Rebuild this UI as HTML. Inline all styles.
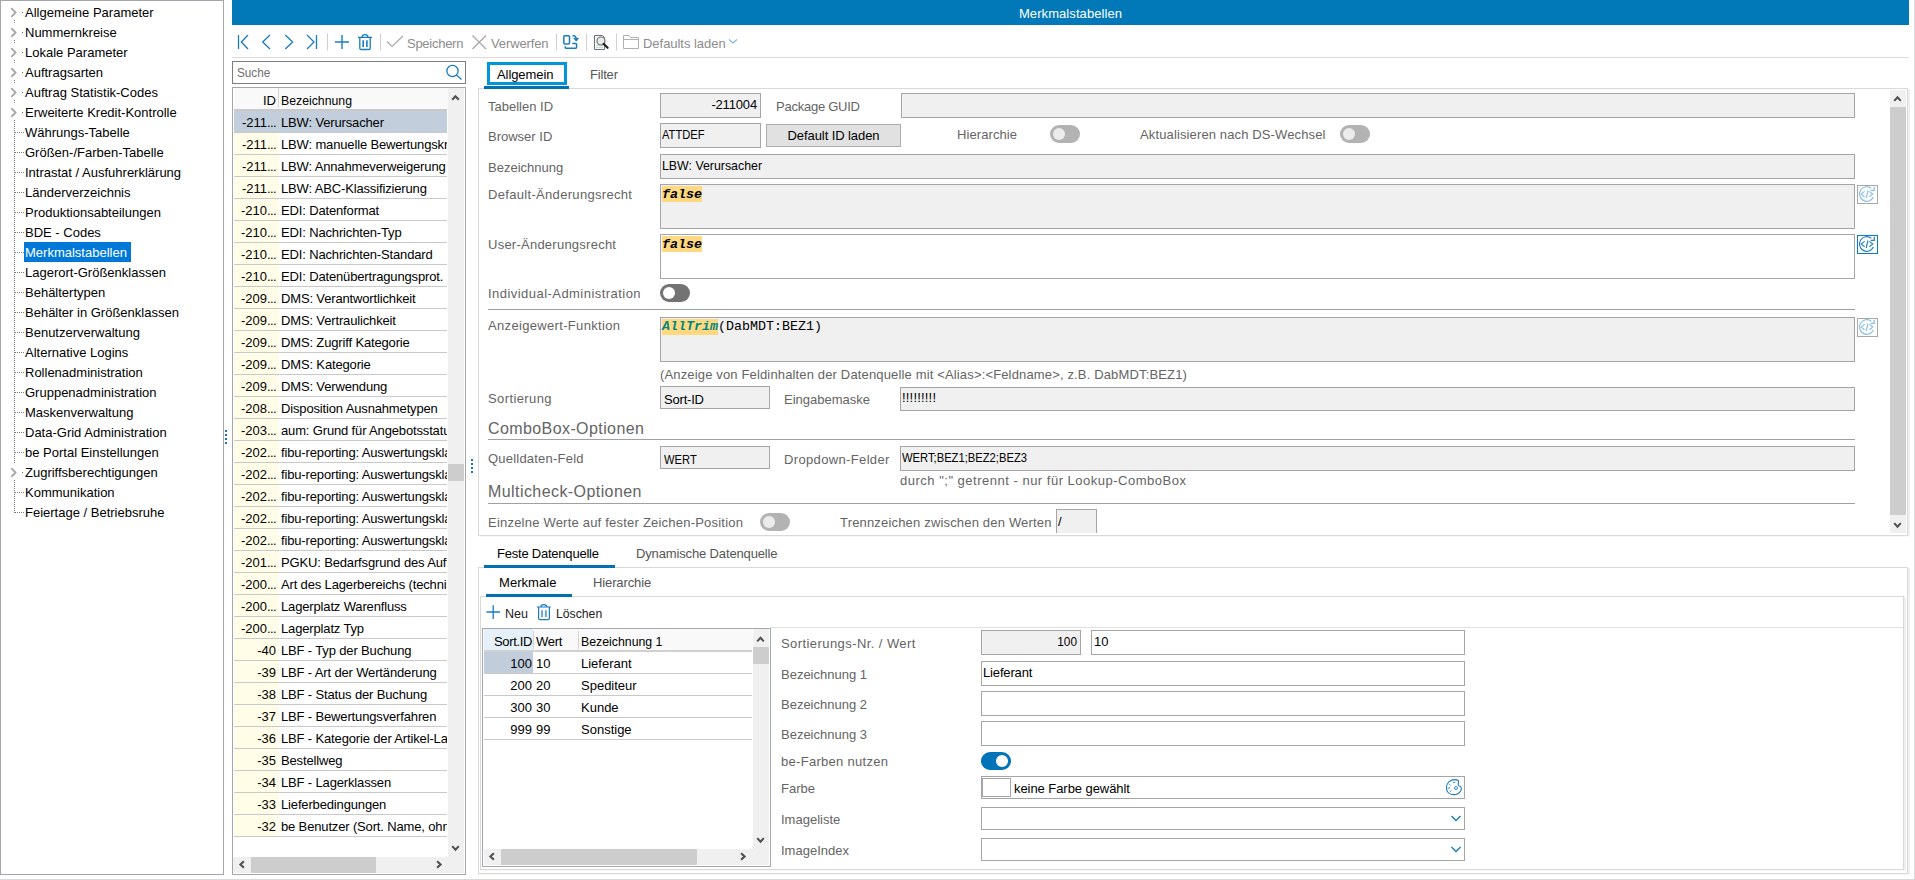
<!DOCTYPE html><html><head><meta charset="utf-8"><style>
html,body{margin:0;padding:0;}
body{width:1915px;height:880px;position:relative;overflow:hidden;background:#fff;font-family:"Liberation Sans",sans-serif;font-size:13px;color:#000;}
div{box-sizing:border-box;}
.t{position:absolute;white-space:nowrap;}
.lbl{color:#636363;}
.fld{position:absolute;background:#f0f0f0;border:1px solid #a5a5a5;}
.fldw{position:absolute;background:#fff;border:1px solid #a5a5a5;}
svg{position:absolute;overflow:visible;}
</style></head><body>
<div style="position:absolute;left:1914px;top:0px;width:1px;height:880px;background:#dcdcdc;"></div>
<div style="position:absolute;left:0px;top:879px;width:1915px;height:1px;background:#d9d9d9;"></div>
<div style="position:absolute;left:0px;top:0px;width:224px;height:875px;border:1px solid #a3a6ab;background:#fff;"></div>
<div style="position:absolute;left:14px;top:20px;width:1px;height:493px;background:repeating-linear-gradient(to bottom,#7a7a7a 0 1px,transparent 1px 2px);"></div>
<div style="position:absolute;left:10px;top:4px;width:9px;height:16px;background:#fff;"></div>
<svg style="left:0;top:0" width="1" height="1"><path d="M11.3 8.2 L15.6 12.5 L11.3 16.8" fill="none" stroke="#a6a6a6" stroke-width="1.8"/></svg>
<div style="position:absolute;left:22px;top:12px;width:1px;height:1px;background:#666;"></div>
<div class="t" style="left:25px;top:4px;line-height:18px;color:#000;">Allgemeine Parameter</div>
<div style="position:absolute;left:10px;top:24px;width:9px;height:16px;background:#fff;"></div>
<svg style="left:0;top:0" width="1" height="1"><path d="M11.3 28.2 L15.6 32.5 L11.3 36.8" fill="none" stroke="#a6a6a6" stroke-width="1.8"/></svg>
<div style="position:absolute;left:22px;top:32px;width:1px;height:1px;background:#666;"></div>
<div class="t" style="left:25px;top:24px;line-height:18px;color:#000;">Nummernkreise</div>
<div style="position:absolute;left:10px;top:44px;width:9px;height:16px;background:#fff;"></div>
<svg style="left:0;top:0" width="1" height="1"><path d="M11.3 48.2 L15.6 52.5 L11.3 56.8" fill="none" stroke="#a6a6a6" stroke-width="1.8"/></svg>
<div style="position:absolute;left:22px;top:52px;width:1px;height:1px;background:#666;"></div>
<div class="t" style="left:25px;top:44px;line-height:18px;color:#000;">Lokale Parameter</div>
<div style="position:absolute;left:10px;top:64px;width:9px;height:16px;background:#fff;"></div>
<svg style="left:0;top:0" width="1" height="1"><path d="M11.3 68.2 L15.6 72.5 L11.3 76.8" fill="none" stroke="#a6a6a6" stroke-width="1.8"/></svg>
<div style="position:absolute;left:22px;top:72px;width:1px;height:1px;background:#666;"></div>
<div class="t" style="left:25px;top:64px;line-height:18px;color:#000;">Auftragsarten</div>
<div style="position:absolute;left:10px;top:84px;width:9px;height:16px;background:#fff;"></div>
<svg style="left:0;top:0" width="1" height="1"><path d="M11.3 88.2 L15.6 92.5 L11.3 96.8" fill="none" stroke="#a6a6a6" stroke-width="1.8"/></svg>
<div style="position:absolute;left:22px;top:92px;width:1px;height:1px;background:#666;"></div>
<div class="t" style="left:25px;top:84px;line-height:18px;color:#000;">Auftrag Statistik-Codes</div>
<div style="position:absolute;left:10px;top:104px;width:9px;height:16px;background:#fff;"></div>
<svg style="left:0;top:0" width="1" height="1"><path d="M11.3 108.2 L15.6 112.5 L11.3 116.8" fill="none" stroke="#a6a6a6" stroke-width="1.8"/></svg>
<div style="position:absolute;left:22px;top:112px;width:1px;height:1px;background:#666;"></div>
<div class="t" style="left:25px;top:104px;line-height:18px;color:#000;">Erweiterte Kredit-Kontrolle</div>
<div style="position:absolute;left:15px;top:132px;width:9px;height:1px;background:repeating-linear-gradient(to right,#7a7a7a 0 1px,transparent 1px 2px);"></div>
<div class="t" style="left:25px;top:124px;line-height:18px;color:#000;">Währungs-Tabelle</div>
<div style="position:absolute;left:15px;top:152px;width:9px;height:1px;background:repeating-linear-gradient(to right,#7a7a7a 0 1px,transparent 1px 2px);"></div>
<div class="t" style="left:25px;top:144px;line-height:18px;color:#000;">Größen-/Farben-Tabelle</div>
<div style="position:absolute;left:15px;top:172px;width:9px;height:1px;background:repeating-linear-gradient(to right,#7a7a7a 0 1px,transparent 1px 2px);"></div>
<div class="t" style="left:25px;top:164px;line-height:18px;color:#000;">Intrastat / Ausfuhrerklärung</div>
<div style="position:absolute;left:15px;top:192px;width:9px;height:1px;background:repeating-linear-gradient(to right,#7a7a7a 0 1px,transparent 1px 2px);"></div>
<div class="t" style="left:25px;top:184px;line-height:18px;color:#000;">Länderverzeichnis</div>
<div style="position:absolute;left:15px;top:212px;width:9px;height:1px;background:repeating-linear-gradient(to right,#7a7a7a 0 1px,transparent 1px 2px);"></div>
<div class="t" style="left:25px;top:204px;line-height:18px;color:#000;">Produktionsabteilungen</div>
<div style="position:absolute;left:15px;top:232px;width:9px;height:1px;background:repeating-linear-gradient(to right,#7a7a7a 0 1px,transparent 1px 2px);"></div>
<div class="t" style="left:25px;top:224px;line-height:18px;color:#000;">BDE - Codes</div>
<div style="position:absolute;left:15px;top:252px;width:9px;height:1px;background:repeating-linear-gradient(to right,#7a7a7a 0 1px,transparent 1px 2px);"></div>
<div style="position:absolute;left:24px;top:242px;width:107px;height:20px;background:#0078d7;"></div>
<div class="t" style="left:25px;top:244px;line-height:18px;color:#fff;">Merkmalstabellen</div>
<div style="position:absolute;left:15px;top:272px;width:9px;height:1px;background:repeating-linear-gradient(to right,#7a7a7a 0 1px,transparent 1px 2px);"></div>
<div class="t" style="left:25px;top:264px;line-height:18px;color:#000;">Lagerort-Größenklassen</div>
<div style="position:absolute;left:15px;top:292px;width:9px;height:1px;background:repeating-linear-gradient(to right,#7a7a7a 0 1px,transparent 1px 2px);"></div>
<div class="t" style="left:25px;top:284px;line-height:18px;color:#000;">Behältertypen</div>
<div style="position:absolute;left:15px;top:312px;width:9px;height:1px;background:repeating-linear-gradient(to right,#7a7a7a 0 1px,transparent 1px 2px);"></div>
<div class="t" style="left:25px;top:304px;line-height:18px;color:#000;">Behälter in Größenklassen</div>
<div style="position:absolute;left:15px;top:332px;width:9px;height:1px;background:repeating-linear-gradient(to right,#7a7a7a 0 1px,transparent 1px 2px);"></div>
<div class="t" style="left:25px;top:324px;line-height:18px;color:#000;">Benutzerverwaltung</div>
<div style="position:absolute;left:15px;top:352px;width:9px;height:1px;background:repeating-linear-gradient(to right,#7a7a7a 0 1px,transparent 1px 2px);"></div>
<div class="t" style="left:25px;top:344px;line-height:18px;color:#000;">Alternative Logins</div>
<div style="position:absolute;left:15px;top:372px;width:9px;height:1px;background:repeating-linear-gradient(to right,#7a7a7a 0 1px,transparent 1px 2px);"></div>
<div class="t" style="left:25px;top:364px;line-height:18px;color:#000;">Rollenadministration</div>
<div style="position:absolute;left:15px;top:392px;width:9px;height:1px;background:repeating-linear-gradient(to right,#7a7a7a 0 1px,transparent 1px 2px);"></div>
<div class="t" style="left:25px;top:384px;line-height:18px;color:#000;">Gruppenadministration</div>
<div style="position:absolute;left:15px;top:412px;width:9px;height:1px;background:repeating-linear-gradient(to right,#7a7a7a 0 1px,transparent 1px 2px);"></div>
<div class="t" style="left:25px;top:404px;line-height:18px;color:#000;">Maskenverwaltung</div>
<div style="position:absolute;left:15px;top:432px;width:9px;height:1px;background:repeating-linear-gradient(to right,#7a7a7a 0 1px,transparent 1px 2px);"></div>
<div class="t" style="left:25px;top:424px;line-height:18px;color:#000;">Data-Grid Administration</div>
<div style="position:absolute;left:15px;top:452px;width:9px;height:1px;background:repeating-linear-gradient(to right,#7a7a7a 0 1px,transparent 1px 2px);"></div>
<div class="t" style="left:25px;top:444px;line-height:18px;color:#000;">be Portal Einstellungen</div>
<div style="position:absolute;left:10px;top:464px;width:9px;height:16px;background:#fff;"></div>
<svg style="left:0;top:0" width="1" height="1"><path d="M11.3 468.2 L15.6 472.5 L11.3 476.8" fill="none" stroke="#a6a6a6" stroke-width="1.8"/></svg>
<div style="position:absolute;left:22px;top:472px;width:1px;height:1px;background:#666;"></div>
<div class="t" style="left:25px;top:464px;line-height:18px;color:#000;">Zugriffsberechtigungen</div>
<div style="position:absolute;left:15px;top:492px;width:9px;height:1px;background:repeating-linear-gradient(to right,#7a7a7a 0 1px,transparent 1px 2px);"></div>
<div class="t" style="left:25px;top:484px;line-height:18px;color:#000;">Kommunikation</div>
<div style="position:absolute;left:15px;top:512px;width:9px;height:1px;background:repeating-linear-gradient(to right,#7a7a7a 0 1px,transparent 1px 2px);"></div>
<div class="t" style="left:25px;top:504px;line-height:18px;color:#000;">Feiertage / Betriebsruhe</div>
<div style="position:absolute;left:225px;top:430px;width:2px;height:2px;background:#1b6fb5;"></div>
<div style="position:absolute;left:225px;top:434px;width:2px;height:2px;background:#1b6fb5;"></div>
<div style="position:absolute;left:225px;top:438px;width:2px;height:2px;background:#1b6fb5;"></div>
<div style="position:absolute;left:225px;top:442px;width:2px;height:2px;background:#1b6fb5;"></div>
<div style="position:absolute;left:232px;top:0px;width:1677px;height:25px;background:#0179b9;"></div>
<div class="t" style="left:232px;top:5px;line-height:17px;width:1677px;text-align:center;color:#fff;letter-spacing:0.073px;">Merkmalstabellen</div>
<div style="position:absolute;left:232px;top:57px;width:1677px;height:1px;background:#dcdcdc;"></div>
<svg style="left:0;top:0" width="1" height="1"><path d="M238.5 35 V49 M248 35 L241.3 42 L248 49" fill="none" stroke="#1a7cc0" stroke-width="1.3"/><path d="M270 35 L262.7 42 L270 49" fill="none" stroke="#1a7cc0" stroke-width="1.3"/><path d="M285.3 35 L292.6 42 L285.3 49" fill="none" stroke="#1a7cc0" stroke-width="1.3"/><path d="M307 35 L314 42 L307 49 M316.5 35 V49" fill="none" stroke="#1a7cc0" stroke-width="1.3"/><path d="M327.5 33.5 V50.5" stroke="#d0d0d0" stroke-width="1"/><path d="M380.5 33.5 V50.5" stroke="#d0d0d0" stroke-width="1"/><path d="M556.5 33.5 V50.5" stroke="#d0d0d0" stroke-width="1"/><path d="M586.5 33.5 V50.5" stroke="#d0d0d0" stroke-width="1"/><path d="M616.5 33.5 V50.5" stroke="#d0d0d0" stroke-width="1"/><path d="M335 42 H349 M342 35 V49" fill="none" stroke="#1a7cc0" stroke-width="1.4"/><path d="M358 37.3 H372 M362 37 Q362.2 34.6 365 34.6 Q367.8 34.6 368 37 M359.8 37.8 V48.2 Q359.8 49.5 361.2 49.5 H368.8 Q370.2 49.5 370.2 48.2 V37.8" fill="none" stroke="#1a7cc0" stroke-width="1.3"/><path d="M363.2 40.2 V47 M366.9 40.2 V47" fill="none" stroke="#1a7cc0" stroke-width="1.6"/><path d="M387 41.5 L392 46.5 L403 36" fill="none" stroke="#a8a8a8" stroke-width="1.2"/><path d="M472.5 35.5 L486 49 M486 35.5 L472.5 49" fill="none" stroke="#a8a8a8" stroke-width="1.3"/><path d="M564.8 35.7 H568.5 Q569.5 35.7 569.5 36.7 V42.9 Q569.5 43.9 568.5 43.9 H564.8 Q563.8 43.9 563.8 42.9 V36.7 Q563.8 35.7 564.8 35.7 Z" fill="none" stroke="#1a7cc0" stroke-width="1.5"/><path d="M565.2 46.2 V47.2 Q565.2 48.3 566.3 48.3 H575.6 Q576.6 48.3 576.6 47.3 V44.4 Q576.6 43.4 575.6 43.4 H572.3 M572.5 35.6 Q575.3 35.6 576.2 38.3" fill="none" stroke="#1a7cc0" stroke-width="1.5"/><path d="M573.8 38.3 L578.6 38.3 L576.3 41.2 Z" fill="#1a7cc0" stroke="#1a7cc0" stroke-width="0.8" stroke-linejoin="round"/><path d="M594.5 35.5 H602.5 L604.5 37.5 V49.5 H594.5 Z" fill="#f4faf6" stroke="#6a7282" stroke-width="1"/><path d="M596 45.5 H603 M596 47.5 H603" stroke="#b5d8c5" stroke-width="0.8"/><circle cx="601" cy="41" r="4" fill="#e6e6e6" fill-opacity="0.8" stroke="#707070" stroke-width="1.2"/><path d="M603.6 43.8 L607.6 47.8" stroke="#202020" stroke-width="2.2" stroke-linecap="round"/><path d="M623.5 48.5 V35.5 H629 L630.5 37.5 H638.5 V48.5 Z M623.5 39.5 H638.5" fill="none" stroke="#b0b0b0" stroke-width="1"/><path d="M729 39.5 L733 43 L737 39.5" fill="none" stroke="#7fb2dc" stroke-width="1.1"/></svg>
<div class="t" style="left:407px;top:35px;line-height:17px;color:#8c8c8c;letter-spacing:-0.270px;">Speichern</div>
<div class="t" style="left:491px;top:35px;line-height:17px;color:#8c8c8c;letter-spacing:-0.118px;">Verwerfen</div>
<div class="t" style="left:643px;top:35px;line-height:17px;color:#8c8c8c;letter-spacing:-0.034px;">Defaults laden</div>
<div style="position:absolute;left:232px;top:61px;width:234px;height:23px;border:1px solid #7d7d7d;background:#fff;"></div>
<div class="t" style="left:237px;top:64px;line-height:17px;color:#6f6f6f;transform:scaleX(0.9031);transform-origin:left center;">Suche</div>
<svg style="left:0;top:0" width="1" height="1"><circle cx="452.5" cy="71" r="5.6" fill="none" stroke="#1a7cc0" stroke-width="1.3"/><path d="M456.5 75 L461.5 79.5" stroke="#1a7cc0" stroke-width="1.3"/></svg>
<div style="position:absolute;left:232px;top:87px;width:234px;height:788px;border:1px solid #a3a6ab;background:#fff;"></div>
<div style="position:absolute;left:234px;top:88px;width:214px;height:21px;background:#f9f9f9;"></div>
<div style="position:absolute;left:278px;top:88px;width:1px;height:20px;background:#d5d5d5;"></div>
<div class="t" style="left:233px;top:92px;line-height:17px;width:43px;text-align:right;">ID</div>
<div class="t" style="left:281px;top:92px;line-height:17px;transform:scaleX(0.9441);transform-origin:left center;">Bezeichnung</div>
<div style="position:absolute;left:234px;top:109px;width:213px;height:2px;background:#c9c9c9;"></div>
<div style="position:absolute;left:234px;top:110px;width:213px;height:747px;overflow:hidden;">
<div style="position:absolute;left:0;top:1px;width:213px;height:21px;background:#c2cedc;"></div>
<div style="position:absolute;left:0;top:22px;width:213px;height:1px;background:#c9c9c9;"></div>
<div class="t" style="left:-1px;top:4px;width:43px;text-align:right;line-height:17px;">-211<span style="letter-spacing:-0.6px">...</span></div>
<div class="t" style="left:47px;top:4px;line-height:17px;letter-spacing:-0.15px;">LBW: Verursacher</div>
<div style="position:absolute;left:0;top:23px;width:45px;height:21px;background:#fffde7;"></div>
<div style="position:absolute;left:0;top:44px;width:213px;height:1px;background:#c9c9c9;"></div>
<div class="t" style="left:-1px;top:26px;width:43px;text-align:right;line-height:17px;">-211<span style="letter-spacing:-0.6px">...</span></div>
<div class="t" style="left:47px;top:26px;line-height:17px;letter-spacing:-0.15px;">LBW: manuelle Bewertungskr</div>
<div style="position:absolute;left:0;top:45px;width:45px;height:21px;background:#fffde7;"></div>
<div style="position:absolute;left:0;top:66px;width:213px;height:1px;background:#c9c9c9;"></div>
<div class="t" style="left:-1px;top:48px;width:43px;text-align:right;line-height:17px;">-211<span style="letter-spacing:-0.6px">...</span></div>
<div class="t" style="left:47px;top:48px;line-height:17px;letter-spacing:-0.15px;">LBW: Annahmeverweigerung</div>
<div style="position:absolute;left:0;top:67px;width:45px;height:21px;background:#fffde7;"></div>
<div style="position:absolute;left:0;top:88px;width:213px;height:1px;background:#c9c9c9;"></div>
<div class="t" style="left:-1px;top:70px;width:43px;text-align:right;line-height:17px;">-211<span style="letter-spacing:-0.6px">...</span></div>
<div class="t" style="left:47px;top:70px;line-height:17px;letter-spacing:-0.15px;">LBW: ABC-Klassifizierung</div>
<div style="position:absolute;left:0;top:89px;width:45px;height:21px;background:#fffde7;"></div>
<div style="position:absolute;left:0;top:110px;width:213px;height:1px;background:#c9c9c9;"></div>
<div class="t" style="left:-1px;top:92px;width:43px;text-align:right;line-height:17px;">-210<span style="letter-spacing:-0.6px">...</span></div>
<div class="t" style="left:47px;top:92px;line-height:17px;letter-spacing:-0.15px;">EDI: Datenformat</div>
<div style="position:absolute;left:0;top:111px;width:45px;height:21px;background:#fffde7;"></div>
<div style="position:absolute;left:0;top:132px;width:213px;height:1px;background:#c9c9c9;"></div>
<div class="t" style="left:-1px;top:114px;width:43px;text-align:right;line-height:17px;">-210<span style="letter-spacing:-0.6px">...</span></div>
<div class="t" style="left:47px;top:114px;line-height:17px;letter-spacing:-0.15px;">EDI: Nachrichten-Typ</div>
<div style="position:absolute;left:0;top:133px;width:45px;height:21px;background:#fffde7;"></div>
<div style="position:absolute;left:0;top:154px;width:213px;height:1px;background:#c9c9c9;"></div>
<div class="t" style="left:-1px;top:136px;width:43px;text-align:right;line-height:17px;">-210<span style="letter-spacing:-0.6px">...</span></div>
<div class="t" style="left:47px;top:136px;line-height:17px;letter-spacing:-0.15px;">EDI: Nachrichten-Standard</div>
<div style="position:absolute;left:0;top:155px;width:45px;height:21px;background:#fffde7;"></div>
<div style="position:absolute;left:0;top:176px;width:213px;height:1px;background:#c9c9c9;"></div>
<div class="t" style="left:-1px;top:158px;width:43px;text-align:right;line-height:17px;">-210<span style="letter-spacing:-0.6px">...</span></div>
<div class="t" style="left:47px;top:158px;line-height:17px;letter-spacing:-0.15px;">EDI: Datenübertragungsprot.</div>
<div style="position:absolute;left:0;top:177px;width:45px;height:21px;background:#fffde7;"></div>
<div style="position:absolute;left:0;top:198px;width:213px;height:1px;background:#c9c9c9;"></div>
<div class="t" style="left:-1px;top:180px;width:43px;text-align:right;line-height:17px;">-209<span style="letter-spacing:-0.6px">...</span></div>
<div class="t" style="left:47px;top:180px;line-height:17px;letter-spacing:-0.15px;">DMS: Verantwortlichkeit</div>
<div style="position:absolute;left:0;top:199px;width:45px;height:21px;background:#fffde7;"></div>
<div style="position:absolute;left:0;top:220px;width:213px;height:1px;background:#c9c9c9;"></div>
<div class="t" style="left:-1px;top:202px;width:43px;text-align:right;line-height:17px;">-209<span style="letter-spacing:-0.6px">...</span></div>
<div class="t" style="left:47px;top:202px;line-height:17px;letter-spacing:-0.15px;">DMS: Vertraulichkeit</div>
<div style="position:absolute;left:0;top:221px;width:45px;height:21px;background:#fffde7;"></div>
<div style="position:absolute;left:0;top:242px;width:213px;height:1px;background:#c9c9c9;"></div>
<div class="t" style="left:-1px;top:224px;width:43px;text-align:right;line-height:17px;">-209<span style="letter-spacing:-0.6px">...</span></div>
<div class="t" style="left:47px;top:224px;line-height:17px;letter-spacing:-0.15px;">DMS: Zugriff Kategorie</div>
<div style="position:absolute;left:0;top:243px;width:45px;height:21px;background:#fffde7;"></div>
<div style="position:absolute;left:0;top:264px;width:213px;height:1px;background:#c9c9c9;"></div>
<div class="t" style="left:-1px;top:246px;width:43px;text-align:right;line-height:17px;">-209<span style="letter-spacing:-0.6px">...</span></div>
<div class="t" style="left:47px;top:246px;line-height:17px;letter-spacing:-0.15px;">DMS: Kategorie</div>
<div style="position:absolute;left:0;top:265px;width:45px;height:21px;background:#fffde7;"></div>
<div style="position:absolute;left:0;top:286px;width:213px;height:1px;background:#c9c9c9;"></div>
<div class="t" style="left:-1px;top:268px;width:43px;text-align:right;line-height:17px;">-209<span style="letter-spacing:-0.6px">...</span></div>
<div class="t" style="left:47px;top:268px;line-height:17px;letter-spacing:-0.15px;">DMS: Verwendung</div>
<div style="position:absolute;left:0;top:287px;width:45px;height:21px;background:#fffde7;"></div>
<div style="position:absolute;left:0;top:308px;width:213px;height:1px;background:#c9c9c9;"></div>
<div class="t" style="left:-1px;top:290px;width:43px;text-align:right;line-height:17px;">-208<span style="letter-spacing:-0.6px">...</span></div>
<div class="t" style="left:47px;top:290px;line-height:17px;letter-spacing:-0.15px;">Disposition Ausnahmetypen</div>
<div style="position:absolute;left:0;top:309px;width:45px;height:21px;background:#fffde7;"></div>
<div style="position:absolute;left:0;top:330px;width:213px;height:1px;background:#c9c9c9;"></div>
<div class="t" style="left:-1px;top:312px;width:43px;text-align:right;line-height:17px;">-203<span style="letter-spacing:-0.6px">...</span></div>
<div class="t" style="left:47px;top:312px;line-height:17px;letter-spacing:-0.15px;">aum: Grund für Angebotsstatus</div>
<div style="position:absolute;left:0;top:331px;width:45px;height:21px;background:#fffde7;"></div>
<div style="position:absolute;left:0;top:352px;width:213px;height:1px;background:#c9c9c9;"></div>
<div class="t" style="left:-1px;top:334px;width:43px;text-align:right;line-height:17px;">-202<span style="letter-spacing:-0.6px">...</span></div>
<div class="t" style="left:47px;top:334px;line-height:17px;letter-spacing:-0.15px;">fibu-reporting: Auswertungsklasse</div>
<div style="position:absolute;left:0;top:353px;width:45px;height:21px;background:#fffde7;"></div>
<div style="position:absolute;left:0;top:374px;width:213px;height:1px;background:#c9c9c9;"></div>
<div class="t" style="left:-1px;top:356px;width:43px;text-align:right;line-height:17px;">-202<span style="letter-spacing:-0.6px">...</span></div>
<div class="t" style="left:47px;top:356px;line-height:17px;letter-spacing:-0.15px;">fibu-reporting: Auswertungsklasse</div>
<div style="position:absolute;left:0;top:375px;width:45px;height:21px;background:#fffde7;"></div>
<div style="position:absolute;left:0;top:396px;width:213px;height:1px;background:#c9c9c9;"></div>
<div class="t" style="left:-1px;top:378px;width:43px;text-align:right;line-height:17px;">-202<span style="letter-spacing:-0.6px">...</span></div>
<div class="t" style="left:47px;top:378px;line-height:17px;letter-spacing:-0.15px;">fibu-reporting: Auswertungsklasse</div>
<div style="position:absolute;left:0;top:397px;width:45px;height:21px;background:#fffde7;"></div>
<div style="position:absolute;left:0;top:418px;width:213px;height:1px;background:#c9c9c9;"></div>
<div class="t" style="left:-1px;top:400px;width:43px;text-align:right;line-height:17px;">-202<span style="letter-spacing:-0.6px">...</span></div>
<div class="t" style="left:47px;top:400px;line-height:17px;letter-spacing:-0.15px;">fibu-reporting: Auswertungsklasse</div>
<div style="position:absolute;left:0;top:419px;width:45px;height:21px;background:#fffde7;"></div>
<div style="position:absolute;left:0;top:440px;width:213px;height:1px;background:#c9c9c9;"></div>
<div class="t" style="left:-1px;top:422px;width:43px;text-align:right;line-height:17px;">-202<span style="letter-spacing:-0.6px">...</span></div>
<div class="t" style="left:47px;top:422px;line-height:17px;letter-spacing:-0.15px;">fibu-reporting: Auswertungsklasse</div>
<div style="position:absolute;left:0;top:441px;width:45px;height:21px;background:#fffde7;"></div>
<div style="position:absolute;left:0;top:462px;width:213px;height:1px;background:#c9c9c9;"></div>
<div class="t" style="left:-1px;top:444px;width:43px;text-align:right;line-height:17px;">-201<span style="letter-spacing:-0.6px">...</span></div>
<div class="t" style="left:47px;top:444px;line-height:17px;letter-spacing:-0.15px;">PGKU: Bedarfsgrund des Auftrags</div>
<div style="position:absolute;left:0;top:463px;width:45px;height:21px;background:#fffde7;"></div>
<div style="position:absolute;left:0;top:484px;width:213px;height:1px;background:#c9c9c9;"></div>
<div class="t" style="left:-1px;top:466px;width:43px;text-align:right;line-height:17px;">-200<span style="letter-spacing:-0.6px">...</span></div>
<div class="t" style="left:47px;top:466px;line-height:17px;letter-spacing:-0.15px;">Art des Lagerbereichs (technisch)</div>
<div style="position:absolute;left:0;top:485px;width:45px;height:21px;background:#fffde7;"></div>
<div style="position:absolute;left:0;top:506px;width:213px;height:1px;background:#c9c9c9;"></div>
<div class="t" style="left:-1px;top:488px;width:43px;text-align:right;line-height:17px;">-200<span style="letter-spacing:-0.6px">...</span></div>
<div class="t" style="left:47px;top:488px;line-height:17px;letter-spacing:-0.15px;">Lagerplatz Warenfluss</div>
<div style="position:absolute;left:0;top:507px;width:45px;height:21px;background:#fffde7;"></div>
<div style="position:absolute;left:0;top:528px;width:213px;height:1px;background:#c9c9c9;"></div>
<div class="t" style="left:-1px;top:510px;width:43px;text-align:right;line-height:17px;">-200<span style="letter-spacing:-0.6px">...</span></div>
<div class="t" style="left:47px;top:510px;line-height:17px;letter-spacing:-0.15px;">Lagerplatz Typ</div>
<div style="position:absolute;left:0;top:529px;width:45px;height:21px;background:#fffde7;"></div>
<div style="position:absolute;left:0;top:550px;width:213px;height:1px;background:#c9c9c9;"></div>
<div class="t" style="left:-1px;top:532px;width:43px;text-align:right;line-height:17px;">-40</div>
<div class="t" style="left:47px;top:532px;line-height:17px;letter-spacing:-0.15px;">LBF - Typ der Buchung</div>
<div style="position:absolute;left:0;top:551px;width:45px;height:21px;background:#fffde7;"></div>
<div style="position:absolute;left:0;top:572px;width:213px;height:1px;background:#c9c9c9;"></div>
<div class="t" style="left:-1px;top:554px;width:43px;text-align:right;line-height:17px;">-39</div>
<div class="t" style="left:47px;top:554px;line-height:17px;letter-spacing:-0.15px;">LBF - Art der Wertänderung</div>
<div style="position:absolute;left:0;top:573px;width:45px;height:21px;background:#fffde7;"></div>
<div style="position:absolute;left:0;top:594px;width:213px;height:1px;background:#c9c9c9;"></div>
<div class="t" style="left:-1px;top:576px;width:43px;text-align:right;line-height:17px;">-38</div>
<div class="t" style="left:47px;top:576px;line-height:17px;letter-spacing:-0.15px;">LBF - Status der Buchung</div>
<div style="position:absolute;left:0;top:595px;width:45px;height:21px;background:#fffde7;"></div>
<div style="position:absolute;left:0;top:616px;width:213px;height:1px;background:#c9c9c9;"></div>
<div class="t" style="left:-1px;top:598px;width:43px;text-align:right;line-height:17px;">-37</div>
<div class="t" style="left:47px;top:598px;line-height:17px;letter-spacing:-0.15px;">LBF - Bewertungsverfahren</div>
<div style="position:absolute;left:0;top:617px;width:45px;height:21px;background:#fffde7;"></div>
<div style="position:absolute;left:0;top:638px;width:213px;height:1px;background:#c9c9c9;"></div>
<div class="t" style="left:-1px;top:620px;width:43px;text-align:right;line-height:17px;">-36</div>
<div class="t" style="left:47px;top:620px;line-height:17px;letter-spacing:-0.15px;">LBF - Kategorie der Artikel-Lagerklassen</div>
<div style="position:absolute;left:0;top:639px;width:45px;height:21px;background:#fffde7;"></div>
<div style="position:absolute;left:0;top:660px;width:213px;height:1px;background:#c9c9c9;"></div>
<div class="t" style="left:-1px;top:642px;width:43px;text-align:right;line-height:17px;">-35</div>
<div class="t" style="left:47px;top:642px;line-height:17px;letter-spacing:-0.15px;">Bestellweg</div>
<div style="position:absolute;left:0;top:661px;width:45px;height:21px;background:#fffde7;"></div>
<div style="position:absolute;left:0;top:682px;width:213px;height:1px;background:#c9c9c9;"></div>
<div class="t" style="left:-1px;top:664px;width:43px;text-align:right;line-height:17px;">-34</div>
<div class="t" style="left:47px;top:664px;line-height:17px;letter-spacing:-0.15px;">LBF - Lagerklassen</div>
<div style="position:absolute;left:0;top:683px;width:45px;height:21px;background:#fffde7;"></div>
<div style="position:absolute;left:0;top:704px;width:213px;height:1px;background:#c9c9c9;"></div>
<div class="t" style="left:-1px;top:686px;width:43px;text-align:right;line-height:17px;">-33</div>
<div class="t" style="left:47px;top:686px;line-height:17px;letter-spacing:-0.15px;">Lieferbedingungen</div>
<div style="position:absolute;left:0;top:705px;width:45px;height:21px;background:#fffde7;"></div>
<div style="position:absolute;left:0;top:726px;width:213px;height:1px;background:#c9c9c9;"></div>
<div class="t" style="left:-1px;top:708px;width:43px;text-align:right;line-height:17px;">-32</div>
<div class="t" style="left:47px;top:708px;line-height:17px;letter-spacing:-0.15px;">be Benutzer (Sort. Name, ohne)</div>
</div>
<div style="position:absolute;left:448px;top:88px;width:16px;height:785px;background:#f0f0f0;"></div>
<div style="position:absolute;left:448px;top:464px;width:16px;height:17px;background:#cdcdcd;"></div>
<svg style="left:0;top:0" width="1" height="1"><path d="M452.2 99.7 L455.5 96.2 L458.8 99.7" fill="none" stroke="#505050" stroke-width="2.1"/></svg>
<svg style="left:0;top:0" width="1" height="1"><path d="M452.2 846.1 L455.5 849.6 L458.8 846.1" fill="none" stroke="#505050" stroke-width="2.1"/></svg>
<div style="position:absolute;left:233px;top:857px;width:215px;height:16px;background:#f0f0f0;"></div>
<div style="position:absolute;left:251px;top:857px;width:125px;height:16px;background:#cdcdcd;"></div>
<svg style="left:0;top:0" width="1" height="1"><path d="M243.9 861.2 L240.4 864.5 L243.9 867.8" fill="none" stroke="#505050" stroke-width="2.1"/></svg>
<svg style="left:0;top:0" width="1" height="1"><path d="M437.1 861.2 L440.6 864.5 L437.1 867.8" fill="none" stroke="#505050" stroke-width="2.1"/></svg>
<div style="position:absolute;left:471px;top:459px;width:2px;height:2px;background:#1b6fb5;"></div>
<div style="position:absolute;left:471px;top:463px;width:2px;height:2px;background:#1b6fb5;"></div>
<div style="position:absolute;left:471px;top:467px;width:2px;height:2px;background:#1b6fb5;"></div>
<div style="position:absolute;left:471px;top:471px;width:2px;height:2px;background:#1b6fb5;"></div>
<div style="position:absolute;left:478px;top:88px;width:1430px;height:448px;border:1px solid #d9d9d9;"></div>
<div style="position:absolute;left:1908px;top:89px;width:2px;height:448px;background:#efefef;"></div>
<div style="position:absolute;left:479px;top:536px;width:1431px;height:1px;background:#f8f8f8;"></div>
<div style="position:absolute;left:487px;top:62px;width:80px;height:23px;border:3px solid #0096da;"></div>
<div style="position:absolute;left:484px;top:86px;width:85px;height:3px;background:#0072b4;"></div>
<div class="t" style="left:497px;top:66px;line-height:17px;letter-spacing:-0.076px;">Allgemein</div>
<div class="t" style="left:590px;top:66px;line-height:17px;color:#555;letter-spacing:-0.178px;">Filter</div>
<div class="t" style="left:488px;top:98px;line-height:17px;color:#646464;">Tabellen ID</div>
<div style="position:absolute;left:660px;top:93px;width:101px;height:25px;background:#f0f0f0;border:1px solid #a5a5a5;"></div>
<div class="t" style="left:660px;top:96px;line-height:17px;width:97px;text-align:right;letter-spacing:-0.161px;">-211004</div>
<div class="t" style="left:776px;top:98px;line-height:17px;color:#646464;letter-spacing:-0.247px;">Package GUID</div>
<div style="position:absolute;left:901px;top:93px;width:954px;height:25px;background:#f0f0f0;border:1px solid #a5a5a5;"></div>
<div class="t" style="left:488px;top:128px;line-height:17px;color:#646464;">Browser ID</div>
<div style="position:absolute;left:660px;top:123px;width:101px;height:25px;background:#f0f0f0;border:1px solid #a5a5a5;"></div>
<div class="t" style="left:662px;top:126px;line-height:17px;transform:scaleX(0.8572);transform-origin:left center;">ATTDEF</div>
<div style="position:absolute;left:766px;top:124px;width:135px;height:23px;background:#e1e1e1;border:1px solid #adadad;"></div>
<div class="t" style="left:766px;top:127px;line-height:17px;width:135px;text-align:center;letter-spacing:-0.083px;">Default ID laden</div>
<div class="t" style="left:957px;top:126px;line-height:17px;color:#646464;letter-spacing:0.082px;">Hierarchie</div>
<div class="t" style="left:1140px;top:126px;line-height:17px;color:#646464;letter-spacing:0.129px;">Aktualisieren nach DS-Wechsel</div>
<div style="position:absolute;left:1050px;top:125px;width:30px;height:18px;background:#b3b3b3;border-radius:9px;"></div>
<div style="position:absolute;left:1053px;top:128px;width:12px;height:12px;background:#ececec;border-radius:50%;"></div>
<div style="position:absolute;left:1340px;top:125px;width:30px;height:18px;background:#b3b3b3;border-radius:9px;"></div>
<div style="position:absolute;left:1343px;top:128px;width:12px;height:12px;background:#ececec;border-radius:50%;"></div>
<div class="t" style="left:488px;top:159px;line-height:17px;color:#646464;">Bezeichnung</div>
<div style="position:absolute;left:660px;top:154px;width:1195px;height:25px;background:#f0f0f0;border:1px solid #a5a5a5;"></div>
<div class="t" style="left:662px;top:157px;line-height:17px;transform:scaleX(0.9500);transform-origin:left center;">LBW: Verursacher</div>
<div class="t" style="left:488px;top:186px;line-height:17px;color:#646464;letter-spacing:0.317px;">Default-Änderungsrecht</div>
<div style="position:absolute;left:660px;top:184px;width:1195px;height:45px;background:#f0f0f0;border:1px solid #a5a5a5;"></div>
<div style="position:absolute;left:662px;top:186px;width:40px;height:16px;background:#ffd982;"></div>
<div class="t" style="left:662px;top:187px;line-height:16px;font-family:Liberation Mono,monospace;font-weight:bold;font-style:italic;font-size:13.33px;">false</div>
<div class="t" style="left:488px;top:236px;line-height:17px;color:#646464;letter-spacing:0.245px;">User-Änderungsrecht</div>
<div style="position:absolute;left:660px;top:234px;width:1195px;height:45px;background:#fff;border:1px solid #a5a5a5;"></div>
<div style="position:absolute;left:662px;top:236px;width:40px;height:16px;background:#ffd982;"></div>
<div class="t" style="left:662px;top:237px;line-height:16px;font-family:Liberation Mono,monospace;font-weight:bold;font-style:italic;font-size:13.33px;">false</div>
<div style="position:absolute;left:1857px;top:185px;width:21px;height:19px;border:1px solid #a8a8a8;background:#fff;"></div>
<svg style="left:0;top:0" width="1" height="1"><path d="M1873.42 197.09 A7.3 7.3 0 1 1 1871.29 188.25" fill="none" stroke="#84bde6" stroke-width="1.15"/><path d="M1874.20 186.80 V190.40 H1870.70" fill="none" stroke="#84bde6" stroke-width="1.2"/><path d="M1864.60 191.40 L1861.20 194.10 L1864.60 196.80 M1869.40 191.40 L1872.80 194.10 L1869.40 196.80 M1868.00 190.50 L1866.20 198.00" fill="none" stroke="#84bde6" stroke-width="1.1"/></svg>
<div style="position:absolute;left:1857px;top:235px;width:21px;height:19px;border:1px solid #0a7ad0;background:#fff;"></div>
<svg style="left:0;top:0" width="1" height="1"><path d="M1873.42 247.09 A7.3 7.3 0 1 1 1871.29 238.25" fill="none" stroke="#1f7fc4" stroke-width="1.15"/><path d="M1874.20 236.80 V240.40 H1870.70" fill="none" stroke="#1f7fc4" stroke-width="1.2"/><path d="M1864.60 241.40 L1861.20 244.10 L1864.60 246.80 M1869.40 241.40 L1872.80 244.10 L1869.40 246.80 M1868.00 240.50 L1866.20 248.00" fill="none" stroke="#1f7fc4" stroke-width="1.1"/></svg>
<div style="position:absolute;left:1857px;top:318px;width:21px;height:19px;border:1px solid #a8a8a8;background:#fff;"></div>
<svg style="left:0;top:0" width="1" height="1"><path d="M1873.42 330.09 A7.3 7.3 0 1 1 1871.29 321.25" fill="none" stroke="#84bde6" stroke-width="1.15"/><path d="M1874.20 319.80 V323.40 H1870.70" fill="none" stroke="#84bde6" stroke-width="1.2"/><path d="M1864.60 324.40 L1861.20 327.10 L1864.60 329.80 M1869.40 324.40 L1872.80 327.10 L1869.40 329.80 M1868.00 323.50 L1866.20 331.00" fill="none" stroke="#84bde6" stroke-width="1.1"/></svg>
<div class="t" style="left:488px;top:285px;line-height:17px;color:#646464;letter-spacing:0.455px;">Individual-Administration</div>
<div style="position:absolute;left:660px;top:284px;width:30px;height:18px;background:#737373;border-radius:9px;"></div>
<div style="position:absolute;left:663px;top:287px;width:12px;height:12px;background:#fff;border-radius:50%;"></div>
<div style="position:absolute;left:488px;top:309px;width:1367px;height:1px;background:#a0a0a0;"></div>
<div class="t" style="left:488px;top:317px;line-height:17px;color:#646464;letter-spacing:0.328px;">Anzeigewert-Funktion</div>
<div style="position:absolute;left:660px;top:317px;width:1195px;height:45px;background:#f0f0f0;border:1px solid #a5a5a5;"></div>
<div style="position:absolute;left:662px;top:319px;width:56px;height:16px;background:#ffd982;"></div>
<div class="t" style="left:662px;top:319px;line-height:16px;font-family:Liberation Mono,monospace;font-size:13.33px;"><span style="color:#00877f;font-weight:bold;font-style:italic;">AllTrim</span>(DabMDT:BEZ1)</div>
<div class="t" style="left:660px;top:366px;line-height:17px;color:#646464;letter-spacing:0.151px;">(Anzeige von Feldinhalten der Datenquelle mit &lt;Alias&gt;:&lt;Feldname&gt;, z.B. DabMDT:BEZ1)</div>
<div class="t" style="left:488px;top:390px;line-height:17px;color:#646464;letter-spacing:0.400px;">Sortierung</div>
<div style="position:absolute;left:660px;top:386px;width:110px;height:23px;background:#f0f0f0;border:1px solid #a5a5a5;"></div>
<div class="t" style="left:664px;top:391px;line-height:17px;letter-spacing:-0.195px;">Sort-ID</div>
<div class="t" style="left:784px;top:391px;line-height:17px;color:#646464;letter-spacing:-0.003px;">Eingabemaske</div>
<div style="position:absolute;left:900px;top:387px;width:955px;height:24px;background:#f0f0f0;border:1px solid #a5a5a5;"></div>
<div class="t" style="left:902px;top:389px;line-height:17px;letter-spacing:0.189px;">!!!!!!!!!</div>
<div class="t" style="left:488px;top:419px;line-height:19px;color:#646464;font-size:16px;letter-spacing:0.405px;">ComboBox-Optionen</div>
<div style="position:absolute;left:488px;top:439px;width:1367px;height:1px;background:#a0a0a0;"></div>
<div class="t" style="left:488px;top:450px;line-height:17px;color:#646464;letter-spacing:0.212px;">Quelldaten-Feld</div>
<div style="position:absolute;left:660px;top:446px;width:110px;height:23px;background:#f0f0f0;border:1px solid #a5a5a5;"></div>
<div class="t" style="left:664px;top:451px;line-height:17px;transform:scaleX(0.8598);transform-origin:left center;">WERT</div>
<div class="t" style="left:784px;top:451px;line-height:17px;color:#646464;letter-spacing:0.352px;">Dropdown-Felder</div>
<div style="position:absolute;left:900px;top:446px;width:955px;height:25px;background:#f0f0f0;border:1px solid #a5a5a5;"></div>
<div class="t" style="left:902px;top:449px;line-height:17px;transform:scaleX(0.8623);transform-origin:left center;">WERT;BEZ1;BEZ2;BEZ3</div>
<div class="t" style="left:900px;top:472px;line-height:17px;color:#646464;letter-spacing:0.503px;">durch ";" getrennt - nur für Lookup-ComboBox</div>
<div class="t" style="left:488px;top:482px;line-height:19px;color:#646464;font-size:16px;letter-spacing:0.425px;">Multicheck-Optionen</div>
<div style="position:absolute;left:488px;top:503px;width:1367px;height:1px;background:#a0a0a0;"></div>
<div class="t" style="left:488px;top:514px;line-height:17px;color:#646464;letter-spacing:0.214px;">Einzelne Werte auf fester Zeichen-Position</div>
<div style="position:absolute;left:760px;top:513px;width:30px;height:18px;background:#b3b3b3;border-radius:9px;"></div>
<div style="position:absolute;left:763px;top:516px;width:12px;height:12px;background:#ececec;border-radius:50%;"></div>
<div class="t" style="left:840px;top:514px;line-height:17px;color:#646464;letter-spacing:0.177px;">Trennzeichen zwischen den Werten</div>
<div style="position:absolute;left:1056px;top:509px;width:41px;height:24px;background:#f0f0f0;border:1px solid #a5a5a5;border-bottom:none;"></div>
<div class="t" style="left:1058px;top:513px;line-height:17px;">/</div>
<div style="position:absolute;left:1890px;top:90px;width:16px;height:443px;background:#f0f0f0;"></div>
<div style="position:absolute;left:1890px;top:107px;width:16px;height:408px;background:#cdcdcd;"></div>
<svg style="left:0;top:0" width="1" height="1"><path d="M1894.2 100.9 L1897.5 97.4 L1900.8 100.9" fill="none" stroke="#505050" stroke-width="2.1"/></svg>
<svg style="left:0;top:0" width="1" height="1"><path d="M1894.2 523.1 L1897.5 526.6 L1900.8 523.1" fill="none" stroke="#505050" stroke-width="2.1"/></svg>
<div style="position:absolute;left:478px;top:567px;width:1430px;height:307px;border:1px solid #d9d9d9;"></div>
<div style="position:absolute;left:1908px;top:568px;width:2px;height:307px;background:#efefef;"></div>
<div style="position:absolute;left:479px;top:874px;width:1431px;height:1px;background:#f8f8f8;"></div>
<div class="t" style="left:497px;top:545px;line-height:17px;letter-spacing:-0.222px;">Feste Datenquelle</div>
<div class="t" style="left:636px;top:545px;line-height:17px;color:#555;letter-spacing:-0.142px;">Dynamische Datenquelle</div>
<div style="position:absolute;left:484px;top:565px;width:131px;height:3px;background:#0072b4;"></div>
<div style="position:absolute;left:480px;top:596px;width:1424px;height:274px;border:1px solid #d9d9d9;"></div>
<div style="position:absolute;left:1904px;top:597px;width:2px;height:274px;background:#efefef;"></div>
<div style="position:absolute;left:481px;top:870px;width:1425px;height:1px;background:#f8f8f8;"></div>
<div class="t" style="left:499px;top:574px;line-height:17px;letter-spacing:0.046px;">Merkmale</div>
<div class="t" style="left:593px;top:574px;line-height:17px;color:#555;letter-spacing:-0.118px;">Hierarchie</div>
<div style="position:absolute;left:486px;top:594px;width:86px;height:3px;background:#0072b4;"></div>
<svg style="left:0;top:0" width="1" height="1"><path d="M486.5 612 H500 M493.2 605.3 V619" fill="none" stroke="#1a7cc0" stroke-width="1.3"/><path d="M536.8 607 H550.8 M540.8 606.8 Q541 604.6 543.8 604.6 Q546.6 604.6 546.8 606.8 M538.6 607.5 V618.2 Q538.6 619.6 540 619.6 H548 Q549.4 619.6 549.4 618.2 V607.5" fill="none" stroke="#1a7cc0" stroke-width="1.2"/><path d="M542 610.3 V617 M545.9 610.3 V617" fill="none" stroke="#4a97cf" stroke-width="1.6"/></svg>
<div class="t" style="left:505px;top:605px;line-height:17px;color:#222;transform:scaleX(0.9640);transform-origin:left center;">Neu</div>
<div class="t" style="left:556px;top:605px;line-height:17px;color:#222;transform:scaleX(0.9396);transform-origin:left center;">Löschen</div>
<div style="position:absolute;left:770px;top:627px;width:1133px;height:1px;background:#e0e0e0;"></div>
<div style="position:absolute;left:482px;top:628px;width:289px;height:239px;border:1px solid #a3a6ab;background:#fff;"></div>
<div style="position:absolute;left:484px;top:629px;width:268px;height:21px;background:#f9f9f9;"></div>
<div style="position:absolute;left:484px;top:629px;width:49px;height:21px;background:#e5f0f9;"></div>
<div style="position:absolute;left:533px;top:631px;width:1px;height:18px;background:#d5d5d5;"></div>
<div style="position:absolute;left:578px;top:631px;width:1px;height:18px;background:#d5d5d5;"></div>
<div style="position:absolute;left:484px;top:650px;width:268px;height:2px;background:#d0d0d0;"></div>
<div class="t" style="left:484px;top:633px;line-height:17px;width:48px;text-align:right;letter-spacing:-0.342px;">Sort.ID</div>
<div class="t" style="left:536px;top:633px;line-height:17px;letter-spacing:-0.301px;">Wert</div>
<div class="t" style="left:581px;top:633px;line-height:17px;transform:scaleX(0.9472);transform-origin:left center;">Bezeichnung 1</div>
<div style="position:absolute;left:484px;top:652px;width:49px;height:21px;background:#c1cddb;"></div>
<div style="position:absolute;left:484px;top:673px;width:268px;height:1px;background:#c9c9c9;"></div>
<div class="t" style="left:484px;top:655px;line-height:17px;width:48px;text-align:right;">100</div>
<div class="t" style="left:536px;top:655px;line-height:17px;">10</div>
<div class="t" style="left:581px;top:655px;line-height:17px;">Lieferant</div>
<div style="position:absolute;left:484px;top:695px;width:268px;height:1px;background:#c9c9c9;"></div>
<div class="t" style="left:484px;top:677px;line-height:17px;width:48px;text-align:right;">200</div>
<div class="t" style="left:536px;top:677px;line-height:17px;">20</div>
<div class="t" style="left:581px;top:677px;line-height:17px;">Spediteur</div>
<div style="position:absolute;left:484px;top:717px;width:268px;height:1px;background:#c9c9c9;"></div>
<div class="t" style="left:484px;top:699px;line-height:17px;width:48px;text-align:right;">300</div>
<div class="t" style="left:536px;top:699px;line-height:17px;">30</div>
<div class="t" style="left:581px;top:699px;line-height:17px;">Kunde</div>
<div style="position:absolute;left:484px;top:739px;width:268px;height:1px;background:#c9c9c9;"></div>
<div class="t" style="left:484px;top:721px;line-height:17px;width:48px;text-align:right;">999</div>
<div class="t" style="left:536px;top:721px;line-height:17px;">99</div>
<div class="t" style="left:581px;top:721px;line-height:17px;">Sonstige</div>
<div style="position:absolute;left:753px;top:629px;width:16px;height:236px;background:#f0f0f0;"></div>
<div style="position:absolute;left:753px;top:647px;width:16px;height:17px;background:#cdcdcd;"></div>
<div style="position:absolute;left:484px;top:849px;width:269px;height:16px;background:#f0f0f0;"></div>
<div style="position:absolute;left:501px;top:849px;width:196px;height:16px;background:#cdcdcd;"></div>
<svg style="left:0;top:0" width="1" height="1"><path d="M757.2 641.4 L760.5 637.9 L763.8 641.4" fill="none" stroke="#505050" stroke-width="2.1"/></svg>
<svg style="left:0;top:0" width="1" height="1"><path d="M757.2 838.1 L760.5 841.6 L763.8 838.1" fill="none" stroke="#505050" stroke-width="2.1"/></svg>
<svg style="left:0;top:0" width="1" height="1"><path d="M493.9 853.2 L490.4 856.5 L493.9 859.8" fill="none" stroke="#505050" stroke-width="2.1"/></svg>
<svg style="left:0;top:0" width="1" height="1"><path d="M741.1 853.2 L744.6 856.5 L741.1 859.8" fill="none" stroke="#505050" stroke-width="2.1"/></svg>
<div class="t" style="left:781px;top:635px;line-height:17px;color:#646464;letter-spacing:0.425px;">Sortierungs-Nr. / Wert</div>
<div style="position:absolute;left:981px;top:630px;width:100px;height:25px;background:#f0f0f0;border:1px solid #a5a5a5;"></div>
<div class="t" style="left:981px;top:633px;line-height:17px;width:96px;text-align:right;transform:scaleX(0.9123);transform-origin:right center;">100</div>
<div style="position:absolute;left:1091px;top:630px;width:374px;height:25px;background:#fff;border:1px solid #a5a5a5;"></div>
<div class="t" style="left:1094px;top:633px;line-height:17px;">10</div>
<div class="t" style="left:781px;top:666px;line-height:17px;color:#646464;letter-spacing:-0.004px;">Bezeichnung 1</div>
<div style="position:absolute;left:981px;top:661px;width:484px;height:25px;background:#fff;border:1px solid #a5a5a5;"></div>
<div class="t" style="left:983px;top:664px;line-height:17px;letter-spacing:-0.151px;">Lieferant</div>
<div class="t" style="left:781px;top:696px;line-height:17px;color:#646464;letter-spacing:-0.004px;">Bezeichnung 2</div>
<div style="position:absolute;left:981px;top:691px;width:484px;height:25px;background:#fff;border:1px solid #a5a5a5;"></div>
<div class="t" style="left:781px;top:726px;line-height:17px;color:#646464;letter-spacing:-0.004px;">Bezeichnung 3</div>
<div style="position:absolute;left:981px;top:721px;width:484px;height:25px;background:#fff;border:1px solid #a5a5a5;"></div>
<div class="t" style="left:781px;top:753px;line-height:17px;color:#646464;letter-spacing:0.290px;">be-Farben nutzen</div>
<div style="position:absolute;left:981px;top:752px;width:30px;height:18px;background:#0073b9;border-radius:9px;"></div>
<div style="position:absolute;left:996px;top:755px;width:12px;height:12px;background:#fff;border-radius:50%;"></div>
<div class="t" style="left:781px;top:780px;line-height:17px;color:#646464;">Farbe</div>
<div style="position:absolute;left:981px;top:776px;width:484px;height:23px;background:#fff;border:1px solid #a5a5a5;"></div>
<div style="position:absolute;left:982px;top:778px;width:29px;height:19px;border:1px solid #a5a5a5;background:#fff;"></div>
<div class="t" style="left:1014px;top:780px;line-height:17px;letter-spacing:-0.062px;">keine Farbe gewählt</div>
<svg style="left:0;top:0" width="1" height="1"><path d="M1455 779.6 C1457.4 779.6 1458.9 780.5 1458.6 782.3 C1458.3 784 1457.3 785 1459 785.7 C1461.3 786.4 1461.8 788.4 1460.9 790.4 C1459.5 793.3 1456.2 794.6 1453.2 794.6 C1449.2 794.6 1446.4 791.8 1446.4 787.5 C1446.4 783.2 1450.2 779.6 1455 779.6 Z" fill="none" stroke="#1a7cc0" stroke-width="1.1"/><circle cx="1456" cy="788" r="1.5" fill="none" stroke="#1a7cc0" stroke-width="0.9"/><path d="M1452.8 782.2 Q1454 782.9 1455.3 782 M1449.3 784.3 L1450.6 785.3 M1447.6 788 Q1448.8 788.7 1450 787.5 M1450 791.6 L1451.4 790.5" fill="none" stroke="#1a7cc0" stroke-width="0.9"/></svg>
<div class="t" style="left:781px;top:811px;line-height:17px;color:#646464;">Imageliste</div>
<div style="position:absolute;left:981px;top:807px;width:484px;height:23px;background:#fff;border:1px solid #a5a5a5;"></div>
<div class="t" style="left:781px;top:842px;line-height:17px;color:#646464;">ImageIndex</div>
<div style="position:absolute;left:981px;top:838px;width:484px;height:23px;background:#fff;border:1px solid #a5a5a5;"></div>
<svg style="left:0;top:0" width="1" height="1"><path d="M1451.5 816 L1456 820.5 L1460.5 816" fill="none" stroke="#1a7cc0" stroke-width="1.4"/><path d="M1451.5 847 L1456 851.5 L1460.5 847" fill="none" stroke="#1a7cc0" stroke-width="1.4"/></svg>
</body></html>
